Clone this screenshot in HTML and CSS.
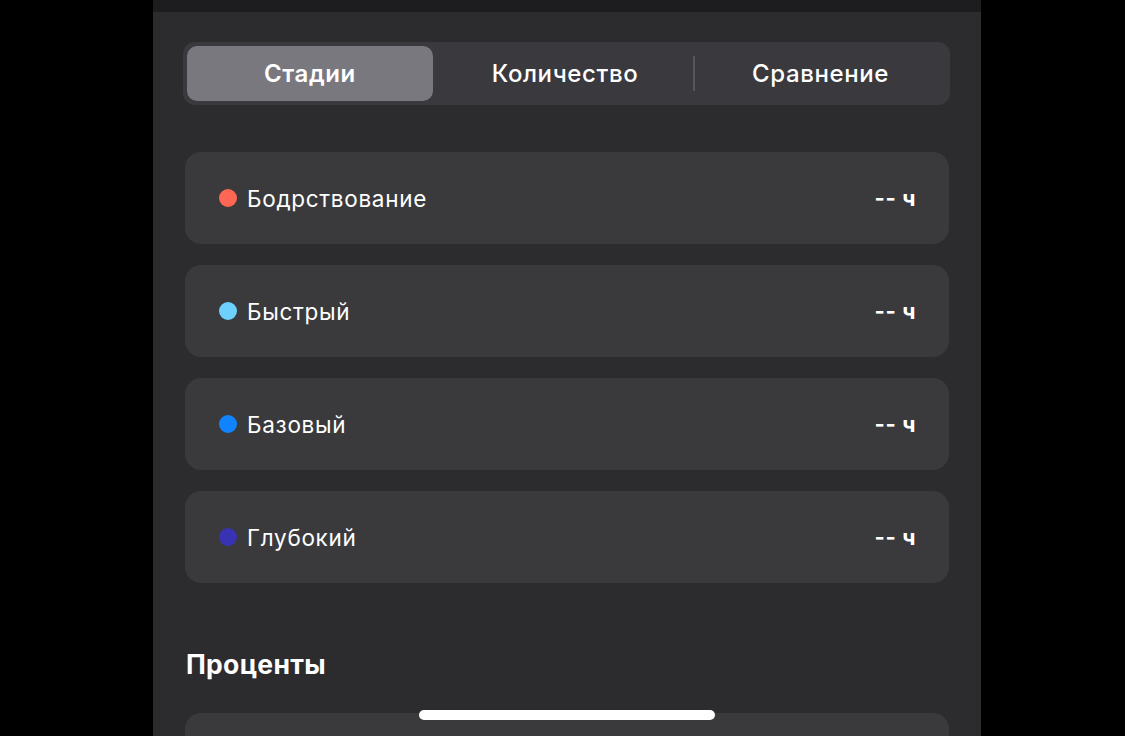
FILE: index.html
```html
<!DOCTYPE html>
<html lang="ru">
<head>
    <meta charset="UTF-8">
    <meta name="viewport" content="width=device-width, initial-scale=1.0">
    <title>Сон</title>
    <link rel="stylesheet" href="styles.css">
</head>
<body>
    <div class="phone">
        <div class="top-bar"></div>

        <!-- Segmented control -->
        <div class="segments">
            <div class="segment active">Стадии</div>
            <div class="segment middle">Количество</div>
            <div class="divider"></div>
            <div class="segment">Сравнение</div>
        </div>

        <!-- Stage rows -->
        <div class="stages">
            <div class="stage">
                <span class="dot awake"></span>
                <span class="stage-name">Бодрствование</span>
                <span class="stage-value">-- ч</span>
            </div>
            <div class="stage">
                <span class="dot rem"></span>
                <span class="stage-name">Быстрый</span>
                <span class="stage-value">-- ч</span>
            </div>
            <div class="stage">
                <span class="dot core"></span>
                <span class="stage-name">Базовый</span>
                <span class="stage-value">-- ч</span>
            </div>
            <div class="stage">
                <span class="dot deep"></span>
                <span class="stage-name">Глубокий</span>
                <span class="stage-value">-- ч</span>
            </div>
        </div>

        <div class="section-title">Проценты</div>
        <div class="stage percent-card"></div>

        <div class="home-indicator"></div>
    </div>
</body>
</html>
```

FILE: styles.css
```css
/* Dark sleep stages screen */
html, body {
    margin: 0;
    height: 100%;
}

body {
    background-color: #000;
    display: flex;
    justify-content: center;
    font-family: 'Inter', 'Noto Sans', sans-serif;
    color: #fff;
    overflow: hidden;
}

.phone {
    position: relative;
    width: 828px;
    height: 736px;
    margin-left: 9px;
    background-color: #2c2c2e;
    box-sizing: border-box;
    padding: 0 32px 0 32px;
    overflow: hidden;
}

.top-bar {
    height: 12px;
    margin: 0 -32px;
    background-color: #1d1d1f;
}

.segments {
    display: flex;
    align-items: center;
    margin: 30px -1px 0 -2px;
    height: 63px;
    padding: 0 4px;
    box-sizing: border-box;
    border-radius: 12px;
    background-color: #3a3a3e;
}

.segment {
    flex: 1;
    height: 55px;
    display: flex;
    align-items: center;
    justify-content: center;
    font-size: 24px;
    font-weight: 500;
    letter-spacing: 0.6px;
    border-radius: 10px;
}

.segment.active {
    flex: 0 0 246px;
    background-color: #79787e;
    font-weight: 600;
}

.segment.middle {
    flex: 0 0 260px;
    padding-left: 4px;
    box-sizing: border-box;
}

.divider {
    width: 2px;
    height: 35px;
    background-color: #55555a;
}

.stages {
    display: flex;
    flex-direction: column;
    gap: 21px;
    margin-top: 47px;
}

.stage {
    display: flex;
    align-items: center;
    height: 92px;
    padding: 0 33px 0 34px;
    border-radius: 16px;
    background-color: #3a3a3c;
}

.dot {
    width: 18px;
    height: 18px;
    border-radius: 50%;
    margin-right: 10px;
}

.awake { background-color: #ff6653; }
.rem   { background-color: #6dd0fd; }
.core  { background-color: #1084fe; }
.deep  { background-color: #3933b4; }

.stage-name {
    flex: 1;
    font-size: 22.5px;
    letter-spacing: 0.7px;
}

.stage-value {
    font-size: 22px;
    font-weight: 700;
    letter-spacing: 0.6px;
}

.section-title {
    margin: 66px 0 0 1px;
    font-size: 26.5px;
    font-weight: 700;
    letter-spacing: 0.3px;
    line-height: 30px;
}

.percent-card {
    margin-top: 34px;
}

.home-indicator {
    position: absolute;
    left: 266px;
    top: 710px;
    width: 296px;
    height: 10px;
    border-radius: 5px;
    background-color: #fff;
}
```
